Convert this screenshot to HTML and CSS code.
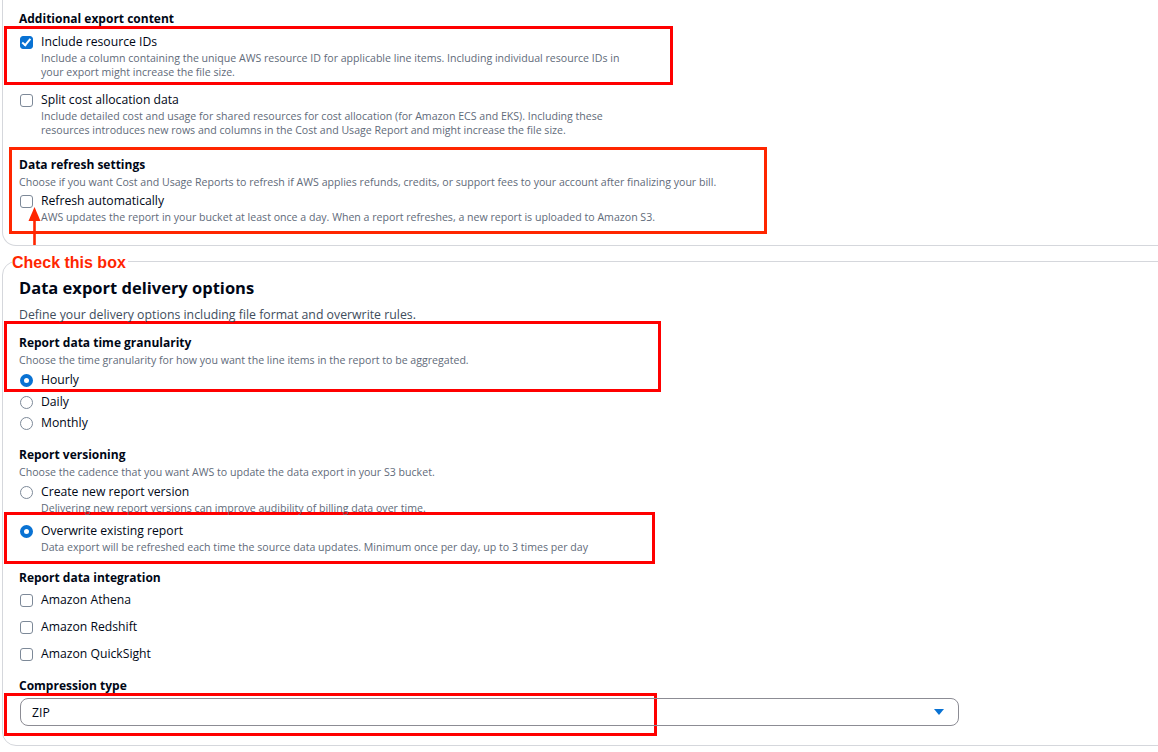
FILE: index.html
```
<!DOCTYPE html>
<html lang="en">
<head>
  <meta charset="UTF-8">
  <meta name="viewport" content="width=device-width, initial-scale=1.0">
  <title>Data export - delivery options</title>
  <link rel="stylesheet" href="styles.css">
</head>
<body>
  <div class="page">

    <!-- 附加匯出內容 -->
    <div class="card card-top">
      <div class="group-title">Additional export content</div>

      <div class="mark mark-ids">
        <div class="option">
          <span class="ctl checkbox checked"></span>
          <div class="option-text">
            <div class="option-label">Include resource IDs</div>
            <div class="option-desc">Include a column containing the unique AWS resource ID for applicable line items. Including individual resource IDs in<br>your export might increase the file size.</div>
          </div>
        </div>
      </div>

      <div class="option option-split">
        <span class="ctl checkbox"></span>
        <div class="option-text">
          <div class="option-label">Split cost allocation data</div>
          <div class="option-desc">Include detailed cost and usage for shared resources for cost allocation (for Amazon ECS and EKS). Including these<br>resources introduces new rows and columns in the Cost and Usage Report and might increase the file size.</div>
        </div>
      </div>

      <div class="mark mark-alt mark-refresh">
        <div class="group-title">Data refresh settings</div>
        <div class="group-desc">Choose if you want Cost and Usage Reports to refresh if AWS applies refunds, credits, or support fees to your account after finalizing your bill.</div>
        <div class="option option-refresh">
          <span class="ctl checkbox"></span>
          <div class="option-text">
            <div class="option-label">Refresh automatically</div>
            <div class="option-desc">AWS updates the report in your bucket at least once a day. When a report refreshes, a new report is uploaded to Amazon S3.</div>
          </div>
        </div>
      </div>
    </div>

    <!-- 提示箭頭 -->
    <svg class="hint-arrow" width="16" height="44" viewBox="0 0 16 44">
      <polygon points="7.5,2 1.5,16 13.5,16" fill="#ff2600"/>
      <rect x="6.2" y="14" width="2.6" height="26" fill="#ff2600"/>
    </svg>
    <div class="hint-label">Check this box</div>

    <!-- 交付選項 -->
    <div class="card card-delivery">
      <h2 class="card-title">Data export delivery options</h2>
      <div class="card-sub">Define your delivery options including file format and overwrite rules.</div>

      <div class="mark mark-granularity">
        <div class="group-title">Report data time granularity</div>
        <div class="group-desc">Choose the time granularity for how you want the line items in the report to be aggregated.</div>
        <div class="option option-first">
          <span class="ctl radio selected"></span>
          <div class="option-label">Hourly</div>
        </div>
      </div>
      <div class="option option-daily">
        <span class="ctl radio"></span>
        <div class="option-label">Daily</div>
      </div>
      <div class="option option-monthly">
        <span class="ctl radio"></span>
        <div class="option-label">Monthly</div>
      </div>

      <div class="group-title section-gap">Report versioning</div>
      <div class="group-desc">Choose the cadence that you want AWS to update the data export in your S3 bucket.</div>
      <div class="option option-first">
        <span class="ctl radio"></span>
        <div class="option-text">
          <div class="option-label">Create new report version</div>
          <div class="option-desc">Delivering new report versions can improve audibility of billing data over time.</div>
        </div>
      </div>

      <div class="mark mark-overwrite">
        <div class="option">
          <span class="ctl radio selected"></span>
          <div class="option-text">
            <div class="option-label">Overwrite existing report</div>
            <div class="option-desc">Data export will be refreshed each time the source data updates. Minimum once per day, up to 3 times per day</div>
          </div>
        </div>
      </div>

      <div class="group-title integration-title">Report data integration</div>
      <div class="integrations">
        <div class="option">
          <span class="ctl checkbox"></span>
          <div class="option-label">Amazon Athena</div>
        </div>
        <div class="option">
          <span class="ctl checkbox"></span>
          <div class="option-label">Amazon Redshift</div>
        </div>
        <div class="option">
          <span class="ctl checkbox"></span>
          <div class="option-label">Amazon QuickSight</div>
        </div>
      </div>

      <div class="group-title section-gap">Compression type</div>
      <div class="mark mark-compression">
        <div class="select">
          <span>ZIP</span>
          <span class="caret"></span>
        </div>
      </div>
    </div>

  </div>
</body>
</html>
```

FILE: styles.css
```
body {
  margin: 0;
  font-family: "Open Sans", "Noto Sans", sans-serif;
  color: #000716;
  background: #fff;
  overflow: hidden;
}
.page {
  position: relative;
  padding-left: 2px;
}
/* 卡片 */
.card {
  border: 1px solid #d5d7dc;
  border-radius: 14px;
  margin-right: -30px;
  padding: 15px 16px 9px 16px;
}
.card-top {
  border-top: none;
  border-radius: 0 0 14px 14px;
  padding-top: 11px;
  padding-bottom: 11px;
}
.card-delivery {
  margin-top: 15px;
}
.card-title {
  margin: 0;
  font-size: 16.5px;
  line-height: 22px;
  font-weight: 700;
}
.card-sub {
  margin-top: 8px;
  font-size: 12.3px;
  line-height: 16px;
  color: #414d5c;
}
.group-title {
  font-size: 12px;
  line-height: 16px;
  font-weight: 700;
}
.group-desc {
  margin-top: 2px;
  font-size: 10.6px;
  line-height: 14px;
  color: #5f6b7a;
}
.section-gap {
  margin-top: 15px;
}
/* 選項列 */
.option {
  display: flex;
  align-items: flex-start;
}
.option-label {
  font-size: 12.2px;
  line-height: 18px;
}
.option-desc {
  font-size: 10.6px;
  line-height: 14px;
  color: #5f6b7a;
}
.option-first {
  margin-top: 4px;
}
.option-split {
  margin-top: 6px;
}
.option-refresh {
  margin-top: 3px;
}
.option-daily {
  margin-top: 1px;
}
.option-monthly {
  margin-top: 3px;
}
.integration-title {
  margin-top: 6px;
}
.integrations {
  display: flex;
  flex-direction: column;
  gap: 9px;
  margin-top: 5px;
}
/* 核取方塊與單選鈕 */
.ctl {
  flex: none;
  box-sizing: border-box;
  width: 13px;
  height: 13px;
  margin: 3px 8px 0 1px;
  border: 1.5px solid #7d8998;
  background: #fff;
}
.checkbox {
  border-radius: 3px;
}
.checkbox.checked {
  border-color: #0972d3;
  background: #0972d3;
  position: relative;
}
.checkbox.checked::after {
  content: "";
  position: absolute;
  left: 3px;
  top: 0px;
  width: 3px;
  height: 6.5px;
  border: solid #fff;
  border-width: 0 2px 2px 0;
  transform: rotate(40deg);
}
.radio {
  border-radius: 50%;
}
.radio.selected {
  border: 4px solid #0972d3;
}
/* 紅框標註 */
.mark {
  box-sizing: border-box;
  border: 3px solid #f00;
  margin-left: -15px;
  padding-left: 12px;
}
.mark-alt {
  border-color: #ff2600;
}
.mark-ids {
  width: 669px;
  margin-top: -1px;
  padding-top: 4px;
  padding-bottom: 3px;
}
.mark-refresh {
  width: 758px;
  margin-top: 10px;
  margin-left: -10px;
  padding: 7px 0 7px 7px;
}
.mark-granularity {
  width: 657px;
  margin-top: -2px;
  padding-top: 11px;
  padding-bottom: 0;
}
.mark-overwrite {
  width: 651px;
  margin-top: -3px;
  padding-top: 7px;
  padding-bottom: 7px;
}
.mark-compression {
  width: 653px;
  margin-top: -1px;
  padding-top: 2px;
  padding-bottom: 7px;
}
/* 下拉選單 */
.select {
  box-sizing: border-box;
  width: 939px;
  height: 28px;
  margin-left: 1px;
  display: flex;
  align-items: center;
  justify-content: space-between;
  padding: 0 14px 0 11px;
  border: 1px solid #8c8c94;
  border-radius: 8px;
  font-size: 12.2px;
}
.caret {
  width: 0;
  height: 0;
  border-left: 5px solid transparent;
  border-right: 5px solid transparent;
  border-top: 6px solid #0972d3;
}
/* 箭頭與提示文字 */
.hint-arrow {
  position: absolute;
  left: 27px;
  top: 205px;
}
.hint-label {
  position: absolute;
  left: 12px;
  top: 255px;
  padding-right: 2px;
  background: #fff;
  font-family: "Liberation Sans", Arial, sans-serif;
  font-weight: 700;
  font-size: 16px;
  line-height: 16px;
  color: #ff2600;
}
```
